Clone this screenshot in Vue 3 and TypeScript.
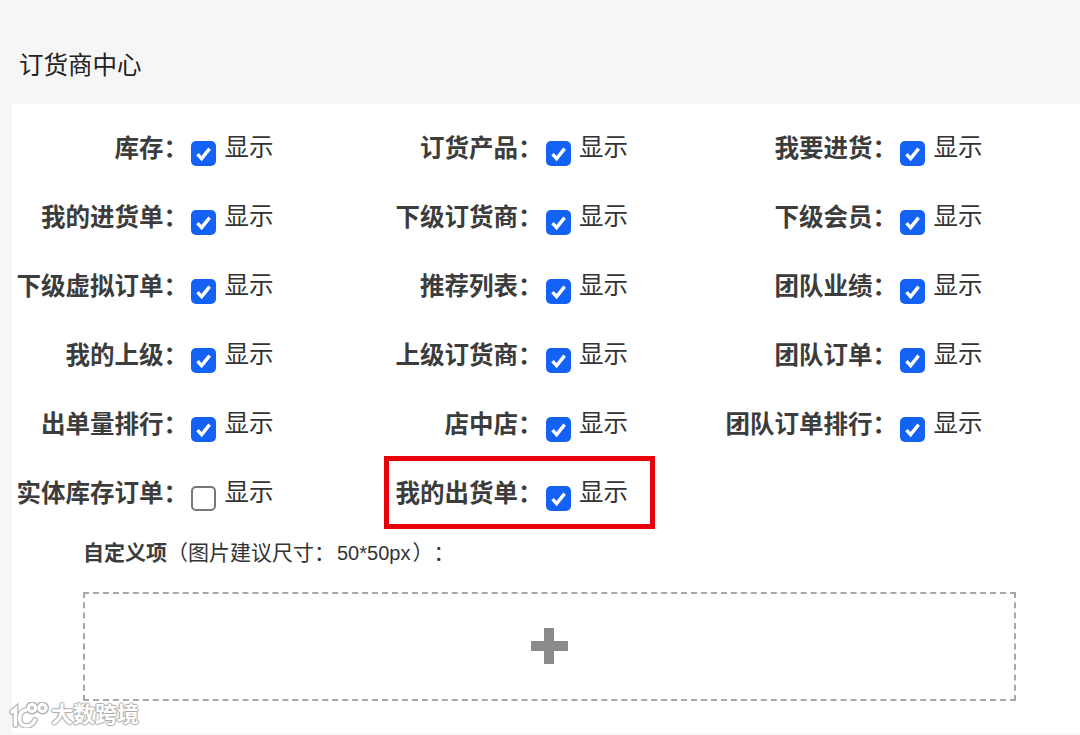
<script setup lang="ts">
interface Item { label: string; checked: boolean; marked?: boolean }
const items: Item[] = [
  { label: '库存', checked: true }, { label: '订货产品', checked: true }, { label: '我要进货', checked: true },
  { label: '我的进货单', checked: true }, { label: '下级订货商', checked: true }, { label: '下级会员', checked: true },
  { label: '下级虚拟订单', checked: true }, { label: '推荐列表', checked: true }, { label: '团队业绩', checked: true },
  { label: '我的上级', checked: true }, { label: '上级订货商', checked: true }, { label: '团队订单', checked: true },
  { label: '出单量排行', checked: true }, { label: '店中店', checked: true }, { label: '团队订单排行', checked: true },
  { label: '实体库存订单', checked: false }, { label: '我的出货单', checked: true, marked: true },
]
</script>

<template>
  <div class="page">
    <h1 class="title">订货商中心</h1>
    <main class="panel">
      <div class="grid">
        <div v-for="item in items" :key="item.label" class="cell">
          <span class="label">{{ item.label }}：</span>
          <span class="box" :class="{ on: item.checked }">
            <svg v-if="item.checked" viewBox="0 0 25 25" width="25" height="25">
              <path d="M6.5 13.2 10.6 17.6 18.6 7.6" fill="none" stroke="#fff" stroke-width="3.4" />
            </svg>
          </span>
          <span class="show">显示</span>
          <span v-if="item.marked" class="mark"></span>
        </div>
      </div>
      <p class="custom"><b>自定义项</b>（图片建议尺寸：<span class="size">50*50px</span>）：</p>
      <div class="drop">
        <svg class="plus" viewBox="0 0 37 36" width="37" height="36">
          <path d="M13 0h10v13h14v10H23v13H13V23H0V13h13z" fill="#8a8a8a" />
        </svg>
      </div>
      <div class="wm">
        <svg viewBox="0 0 40 26" width="40" height="26">
          <g fill="none" stroke="#b8b8b8" stroke-width="6" stroke-linecap="round">
            <path d="M3 10 6.5 7V23" />
            <path d="M17 8C9 9 9 22 15 23.5 20 25 24 22 26 18" />
            <circle cx="23" cy="6" r="3.6" />
            <circle cx="33.5" cy="6" r="3.6" />
          </g>
          <g fill="none" stroke="#fff" stroke-width="3.4" stroke-linecap="round">
            <path d="M3 10 6.5 7V23" />
            <path d="M17 8C9 9 9 22 15 23.5 20 25 24 22 26 18" />
          </g>
          <g fill="#fff" stroke="#fff" stroke-width="3">
            <circle cx="23" cy="6" r="3.6" fill="none" />
            <circle cx="33.5" cy="6" r="3.6" fill="none" />
          </g>
        </svg>
        <span>大数跨境</span>
      </div>
    </main>
  </div>
</template>

<style>
html, body { margin: 0; background: #f6f6f6; }
</style>

<style scoped>
.page {
  width: 1080px;
  height: 735px;
  overflow: hidden;
  background: #f6f6f6;
  font-family: "Liberation Sans", "Noto Sans CJK SC", sans-serif;
  color: #333;
  text-spacing-trim: space-all;
}
.title {
  margin: 0;
  height: 104px;
  padding: 51px 0 0 19px;
  box-sizing: border-box;
  font-size: 24.5px;
  line-height: 30px;
  font-weight: 400;
  color: #222;
}
.panel {
  position: relative;
  margin-left: 12px;
  height: 629px;
  background: #fff;
}
.grid {
  display: grid;
  grid-template-columns: repeat(3, 354.5px);
  grid-auto-rows: 69px;
  padding-top: 10px;
}
.cell {
  position: relative;
  display: flex;
  align-items: flex-start;
}
.label {
  width: 176px;
  flex: none;
  margin-top: 20px;
  text-align: right;
  white-space: nowrap;
  font-size: 24.5px;
  line-height: 30px;
  font-weight: 700;
  color: #3c3c3c;
}
.box {
  flex: none;
  box-sizing: border-box;
  width: 25px;
  height: 25px;
  margin: 27px 0 0 3px;
  border: 2px solid #777;
  border-radius: 5px;
  background: #fff;
}
.box.on {
  border: 0;
  background: #1361f5;
}
.box svg { display: block; }
.show {
  margin: 18px 0 0 8.5px;
  font-size: 24.5px;
  line-height: 32px;
  color: #333;
}
.mark {
  position: absolute;
  left: 17px;
  top: -3px;
  box-sizing: border-box;
  width: 271px;
  height: 73px;
  border: 5px solid #e8000b;
}
.custom {
  margin: 10px 0 0 71px;
  font-size: 21px;
  line-height: 30px;
  color: #333;
}
.custom b { font-weight: 700; color: #3c3c3c; }
.size { font-size: 20px; margin: 0 2px 0 2px; }
.drop {
  box-sizing: border-box;
  width: 933px;
  height: 109px;
  margin: 24px 0 0 71px;
  border: 2px dashed #a8a8a8;
  display: flex;
  align-items: center;
  justify-content: center;
}
.plus { margin-top: -1px; }
.wm {
  position: absolute;
  left: -3px;
  bottom: 5px;
  display: flex;
  align-items: center;
  gap: 2px;
  color: #fff;
}
.wm span {
  font-size: 22px;
  line-height: 26px;
  font-weight: 700;
  color: #fff;
  text-shadow: 1px 0 1px #aaa, -1px 0 1px #aaa, 0 1px 1px #aaa, 0 -1px 1px #aaa;
}
</style>
